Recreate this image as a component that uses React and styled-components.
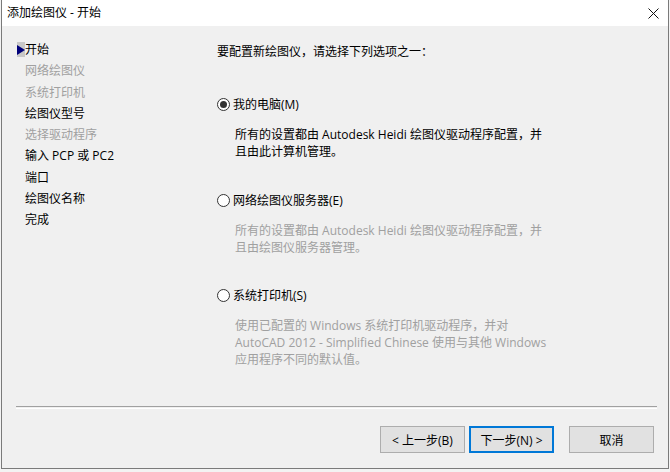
import React from "react";
import styled, { createGlobalStyle } from "styled-components";

const GlobalStyle = createGlobalStyle`
  html, body {
    margin: 0;
    padding: 0;
    background: #f3f3f3;
    width: 670px;
    height: 472px;
    overflow: hidden;
  }
  body {
    font-family: "Open Sans", "Noto Sans CJK SC", sans-serif;
    font-size: 12px;
    color: #000;
  }
`;

const Window = styled.div`
  width: 666px;
  height: 468px;
  border: 1px solid #7a7a7a;
  border-top: none;
  margin-left: 1px;
  background: #f0f0f0;
  display: flex;
  flex-direction: column;
`;

const TitleBar = styled.div`
  height: 26px;
  background: #fff;
  display: flex;
  align-items: center;
  justify-content: space-between;
  padding-left: 5px;
  flex-shrink: 0;
`;

const Title = styled.span`
  font-size: 12px;
  line-height: 26px;
`;

const CloseButton = styled.div`
  width: 30px;
  height: 26px;
  display: flex;
  align-items: center;
  justify-content: center;
  font-size: 15px;
  line-height: 1;
  color: #111;
  font-family: "DejaVu Sans", sans-serif;
  font-weight: 300;
`;

const Content = styled.div`
  display: flex;
  height: 380px;
  flex-shrink: 0;
`;

const Nav = styled.ul`
  list-style: none;
  margin: 0;
  padding: 13px 0 0 14px;
  width: 187px;
`;

const NavItem = styled.li`
  position: relative;
  height: 21.25px;
  line-height: 21px;
  padding-left: 9px;
  color: ${(p) => (p.$disabled ? "#a0a0a0" : "#000")};
  white-space: nowrap;
`;

const Pointer = styled.span`
  position: absolute;
  left: 1px;
  top: 3px;
  width: 8px;
  height: 15px;
  background: #c8c8c8;
  display: flex;
  align-items: center;

  &::after {
    content: "";
    border-top: 5px solid transparent;
    border-bottom: 5px solid transparent;
    border-left: 8px solid #00007a;
  }
`;

const Main = styled.div`
  flex: 1;
  padding: 17px 0 0 14px;
`;

const Heading = styled.div`
  line-height: 17px;
  margin-bottom: 36px;
`;

const Option = styled.div`
  margin-bottom: 31.5px;
`;

const RadioRow = styled.label`
  display: flex;
  align-items: center;
  line-height: 17px;
  gap: 3px;
`;

const Radio = styled.span`
  width: 11px;
  height: 11px;
  border: 1px solid #333;
  border-radius: 50%;
  background: #fff;
  display: flex;
  align-items: center;
  justify-content: center;
  flex-shrink: 0;

  &::after {
    content: "";
    display: ${(p) => (p.$checked ? "block" : "none")};
    width: 7px;
    height: 7px;
    border-radius: 50%;
    background: #333;
  }
`;

const Desc = styled.p`
  margin: 13px 0 0 18px;
  line-height: 17px;
  color: ${(p) => (p.$disabled ? "#a0a0a0" : "#000")};
  width: 360px;
`;

const Separator = styled.div`
  margin: 0 11px 0 14px;
  height: 1px;
  border-top: 1px solid #a0a0a0;
  border-bottom: 1px solid #fff;
  flex-shrink: 0;
`;

const ButtonRow = styled.div`
  display: flex;
  justify-content: flex-end;
  gap: 4px;
  padding: 17px 14px 0 0;
`;

const Button = styled.button`
  width: 85px;
  height: 27px;
  margin-left: ${(p) => p.$gapLeft || 0}px;
  background: #e1e1e1;
  border: ${(p) => (p.$default ? "2px solid #0078d7" : "1px solid #adadad")};
  font-family: inherit;
  font-size: 12px;
  color: #000;
  padding: 0;
`;

const options = [
  {
    label: "我的电脑(M)",
    checked: true,
    disabled: false,
    desc: ["所有的设置都由 Autodesk Heidi 绘图仪驱动程序配置，并", "且由此计算机管理。"],
  },
  {
    label: "网络绘图仪服务器(E)",
    checked: false,
    disabled: true,
    desc: ["所有的设置都由 Autodesk Heidi 绘图仪驱动程序配置，并", "且由绘图仪服务器管理。"],
  },
  {
    label: "系统打印机(S)",
    checked: false,
    disabled: true,
    desc: [
      "使用已配置的 Windows 系统打印机驱动程序，并对",
      "AutoCAD 2012 - Simplified Chinese 使用与其他 Windows",
      "应用程序不同的默认值。",
    ],
  },
];

const steps = [
  { text: "开始", current: true },
  { text: "网络绘图仪", disabled: true },
  { text: "系统打印机", disabled: true },
  { text: "绘图仪型号" },
  { text: "选择驱动程序", disabled: true },
  { text: "输入 PCP 或 PC2" },
  { text: "端口" },
  { text: "绘图仪名称" },
  { text: "完成" },
];

const App = () => {
  return (
    <>
      <GlobalStyle />
      <Window>
        <TitleBar>
          <Title>添加绘图仪 - 开始</Title>
          <CloseButton>
            <svg width="11" height="11" viewBox="0 0 11 11">
              <path d="M0.5 0.5 L10.5 10.5 M10.5 0.5 L0.5 10.5" stroke="#111" strokeWidth="1" fill="none" />
            </svg>
          </CloseButton>
        </TitleBar>
        <Content>
          <Nav>
            {steps.map((s) => (
              <NavItem key={s.text} $disabled={s.disabled}>
                {s.current && <Pointer />}
                {s.text}
              </NavItem>
            ))}
          </Nav>
          <Main>
            <Heading>要配置新绘图仪，请选择下列选项之一：</Heading>
            {options.map((o) => (
              <Option key={o.label}>
                <RadioRow>
                  <Radio $checked={o.checked} />
                  {o.label}
                </RadioRow>
                <Desc $disabled={o.disabled}>
                  {o.desc.map((line, i) => (
                    <React.Fragment key={i}>
                      {line}
                      {i < o.desc.length - 1 && <br />}
                    </React.Fragment>
                  ))}
                </Desc>
              </Option>
            ))}
          </Main>
        </Content>
        <Separator />
        <ButtonRow>
          <Button>&lt; 上一步(B)</Button>
          <Button $default>下一步(N) &gt;</Button>
          <Button $gapLeft={11}>取消</Button>
        </ButtonRow>
      </Window>
    </>
  );
};

export default App;
